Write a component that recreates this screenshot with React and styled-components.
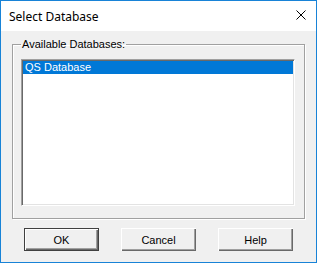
import React from "react";
import styled, { createGlobalStyle } from "styled-components";

const GlobalStyle = createGlobalStyle`
  html, body {
    margin: 0;
    padding: 0;
    background: #ffffff;
  }
  * {
    box-sizing: border-box;
  }
`;

const Window = styled.div`
  width: 317px;
  height: 263px;
  border: 1px solid #1883d7;
  display: flex;
  flex-direction: column;
  font-family: "Liberation Sans", Arial, sans-serif;
`;

const TitleBar = styled.div`
  height: 30px;
  background: #ffffff;
  display: flex;
  align-items: center;
  justify-content: space-between;
  padding: 0 10px 0 8px;
`;

const Title = styled.span`
  font-family: "Noto Sans", "Open Sans", sans-serif;
  font-size: 12px;
  color: #000000;
`;

const CloseButton = styled.span`
  display: flex;
  width: 10px;
  height: 10px;
  margin-top: -2px;
`;

const Body = styled.div`
  flex: 1;
  background: #f0f0f0;
  padding: 7px 11px 0 11px;
  display: flex;
  flex-direction: column;
`;

const GroupBox = styled.fieldset`
  margin: 0;
  height: 181px;
  padding: 0 9px 12px 8px;
  border: 1px solid #a0a0a0;
  box-shadow: 1px 1px 0 #ffffff, inset 1px 1px 0 #ffffff;
`;

const Legend = styled.legend`
  font-size: 11px;
  line-height: 13px;
  padding: 0 1px;
  margin-left: 0;
  color: #000000;
`;

const ListBox = styled.div`
  margin-top: 8px;
  height: 147px;
  background: #ffffff;
  border-top: 1px solid #a0a0a0;
  border-left: 1px solid #a0a0a0;
  border-right: 1px solid #ffffff;
  border-bottom: 1px solid #ffffff;
  box-shadow: inset 1px 1px 0 #696969, inset -1px -1px 0 #e3e3e3;
  padding: 1px;
`;

const ListItem = styled.div`
  height: 13px;
  line-height: 13px;
  font-size: 11px;
  padding-left: 2px;
  background: ${(p) => (p.selected ? "#0078d7" : "transparent")};
  color: ${(p) => (p.selected ? "#ffffff" : "#000000")};
`;

const ButtonRow = styled.div`
  display: flex;
  gap: 22px;
  padding-left: 12px;
  margin-top: 9px;
`;

const Button = styled.button`
  width: 75px;
  height: 23px;
  padding: 0;
  font-family: "Liberation Sans", Arial, sans-serif;
  font-size: 11px;
  color: #000000;
  background: #f0f0f0;
  border: ${(p) => (p.primary ? "1px solid #404040" : "none")};
  box-shadow: inset 1px 1px 0 #ffffff, inset -1px -1px 0 #696969,
    inset -2px -2px 0 #a0a0a0;
  border-radius: 0;
`;

function CloseIcon() {
  return (
    <svg width="10" height="10" viewBox="0 0 10 10">
      <path d="M0.5 0.5 L9.5 9.5 M9.5 0.5 L0.5 9.5" stroke="#000" strokeWidth="1" />
    </svg>
  );
}

export default function App() {
  return (
    <>
      <GlobalStyle />
      <Window>
        <TitleBar>
          <Title>Select Database</Title>
          <CloseButton>
            <CloseIcon />
          </CloseButton>
        </TitleBar>
        <Body>
          <GroupBox>
            <Legend>Available Databases:</Legend>
            <ListBox>
              <ListItem selected>QS Database</ListItem>
            </ListBox>
          </GroupBox>
          <ButtonRow>
            <Button primary>OK</Button>
            <Button>Cancel</Button>
            <Button>Help</Button>
          </ButtonRow>
        </Body>
      </Window>
    </>
  );
}
